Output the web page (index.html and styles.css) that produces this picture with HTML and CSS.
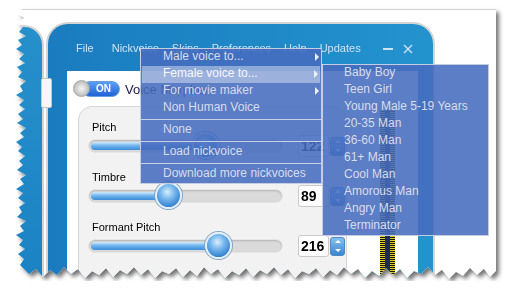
FILE: index.html
```html
<!DOCTYPE html>
<html lang="en">
  <head>
    <title>Nickvoice menu</title>
    <link rel="stylesheet" href="styles.css">
  </head>

  <body>
    <div class="stage">
      <div class="paper">
        <div class="sheet">
          <div class="side-win"></div>
          <div class="main-win">
            <div class="menubar">
              <span class="mb-file">File</span>
              <span>Nickvoice</span>
              <span>Skins</span>
              <span>Preferences</span>
              <span>Help</span>
              <span>Updates</span>
              <span class="win-btns">
                <span class="min"></span>
                <svg width="10" height="10" viewBox="0 0 10 10"><path d="M1 1L9 9M9 1L1 9" stroke="#cfe2f1" stroke-width="1.4"/></svg>
              </span>
            </div>
            <div class="content">
              <div class="toggle-row">
                <div class="toggle">
                  <span class="pill">ON</span>
                  <span class="knob"></span>
                </div>
                <span class="title">Voice Morpher</span>
              </div>
              <div class="body-row">
                <div class="panel">
                  <div class="ctl">
                    <div class="ctl-label">Pitch</div>
                    <div class="slider-row">
                      <div class="track"><div class="fill" style="width:117px"></div><div class="thumb" style="left:103px"></div></div>
                      <div class="val">122</div>
                      <div class="spin"><span class="up"></span><span class="down"></span></div>
                    </div>
                  </div>
                  <div class="ctl">
                    <div class="ctl-label">Timbre</div>
                    <div class="slider-row">
                      <div class="track"><div class="fill" style="width:80px"></div><div class="thumb" style="left:66px"></div></div>
                      <div class="val">89</div>
                      <div class="spin"><span class="up"></span><span class="down"></span></div>
                    </div>
                  </div>
                  <div class="ctl">
                    <div class="ctl-label">Formant Pitch</div>
                    <div class="slider-row">
                      <div class="track"><div class="fill" style="width:130px"></div><div class="thumb" style="left:116px"></div></div>
                      <div class="val">216</div>
                      <div class="spin"><span class="up"></span><span class="down"></span></div>
                    </div>
                  </div>
                </div>
                <div class="meter"><span class="bar"></span><span class="mid"></span><span class="bar"></span></div>
              </div>
            </div>
          </div>
        </div>
      </div>

      <div class="handle"></div>

      <div class="menu main-menu">
        <div class="menu-item">Male voice to...<span class="arrow"></span></div>
        <div class="menu-item active">Female voice to...<span class="arrow"></span></div>
        <div class="menu-item">For movie maker<span class="arrow"></span></div>
        <div class="menu-item">Non Human Voice</div>
        <div class="sep"></div>
        <div class="menu-item">None</div>
        <div class="sep"></div>
        <div class="menu-item">Load nickvoice</div>
        <div class="sep"></div>
        <div class="menu-item">Download more nickvoices</div>
      </div>

      <div class="menu sub-menu">
        <div class="menu-item">Baby Boy</div>
        <div class="menu-item">Teen Girl</div>
        <div class="menu-item">Young Male 5-19 Years</div>
        <div class="menu-item">20-35 Man</div>
        <div class="menu-item">36-60 Man</div>
        <div class="menu-item">61+ Man</div>
        <div class="menu-item">Cool Man</div>
        <div class="menu-item">Amorous Man</div>
        <div class="menu-item">Angry Man</div>
        <div class="menu-item">Terminator</div>
      </div>
    </div>
  </body>
</html>
```

FILE: styles.css
```css
body {
  margin: 0;
  background-color: white;
  font-family: "Liberation Sans", Arial, sans-serif;
}

.stage {
  position: relative;
  padding: 9px 0 0 14px;
}

/* torn screenshot */
.paper {
  width: 482px;
  height: 272px;
  filter: drop-shadow(3px 3px 2px rgba(0, 0, 0, 0.55));
}

.sheet {
  width: 100%;
  height: 100%;
  box-sizing: border-box;
  background-color: white;
  border-top: 1px solid #d4d4d4;
  display: flex;
  align-items: flex-start;
  overflow: hidden;
  clip-path: polygon(8px 0, 482px 0, 482px 262px, 476px 268px, 470px 260px, 463px 266px, 456px 259px, 449px 267px, 442px 263px, 435px 270px, 428px 261px, 421px 266px, 414px 258px, 407px 265px, 400px 262px, 393px 269px, 386px 260px, 379px 266px, 372px 259px, 365px 267px, 358px 262px, 351px 269px, 344px 260px, 337px 265px, 330px 258px, 323px 266px, 316px 261px, 309px 268px, 302px 259px, 295px 265px, 288px 262px, 281px 269px, 274px 260px, 267px 266px, 260px 258px, 253px 265px, 246px 261px, 239px 268px, 232px 259px, 225px 266px, 218px 262px, 211px 269px, 204px 260px, 197px 265px, 190px 258px, 183px 267px, 176px 261px, 169px 268px, 162px 259px, 155px 265px, 148px 262px, 141px 269px, 134px 260px, 127px 266px, 120px 258px, 113px 265px, 106px 261px, 99px 268px, 92px 259px, 85px 266px, 78px 262px, 71px 269px, 64px 260px, 57px 265px, 50px 258px, 43px 266px, 36px 261px, 29px 268px, 22px 260px, 15px 265px, 12px 262px, 6px 256px, 10px 250px, 4px 245px, 11px 240px, 5px 236px, 9px 231px, 2px 226px, 10px 222px, 6px 217px, 12px 212px, 3px 208px, 8px 203px, 5px 198px, 11px 194px, 4px 189px, 9px 184px, 2px 180px, 10px 175px, 6px 170px, 12px 166px, 3px 161px, 9px 156px, 5px 152px, 11px 147px, 4px 142px, 8px 138px, 2px 133px, 10px 128px, 6px 124px, 12px 119px, 3px 114px, 9px 110px, 4px 105px, 11px 100px, 5px 96px, 10px 91px, 2px 86px, 9px 82px, 6px 77px, 12px 72px, 4px 68px, 8px 63px, 3px 58px, 11px 54px, 5px 50px, 10px 45px, 2px 40px, 8px 36px, 4px 31px, 12px 27px, 5px 23px, 9px 18px, 3px 14px, 10px 9px, 4px 5px);
}

.side-win {
  margin-top: 15px;
  width: 28px;
  height: 260px;
  background: linear-gradient(to bottom, #2690cb, #1b82c3);
  border-top: 2px solid #d4d4d4;
  border-right: 2px solid #d4d4d4;
  border-top-right-radius: 20px;
}

.main-win {
  margin: 12px 0 0 2px;
  width: 385px;
  height: 258px;
  border: 2px solid #d4d4d4;
  border-bottom: 0;
  border-radius: 22px 22px 0 0;
  background: linear-gradient(to right, #1a7cbf, #2393ce);
  display: flex;
  flex-direction: column;
}

.menubar {
  flex-shrink: 0;
  height: 47px;
  box-sizing: border-box;
  padding: 18px 20px 0 28px;
  display: flex;
  align-items: flex-start;
  gap: 13px;
  font-size: 11px;
  line-height: 13px;
  color: #cfe2f1;
}
.mb-file {
  margin-right: 5px;
}
.win-btns {
  margin-left: auto;
  height: 13px;
  display: flex;
  align-items: center;
  gap: 10px;
}
.win-btns .min {
  width: 10px;
  height: 2px;
  background-color: #cfe2f1;
}

.content {
  flex: 1;
  min-height: 0;
  overflow: hidden;
  margin: 0 15px 0 19px;
  background-color: white;
}

.toggle-row {
  margin: 9px 0 0 6px;
  height: 18px;
  display: flex;
  align-items: center;
}
.toggle {
  position: relative;
  width: 47px;
  height: 18px;
}
.pill {
  display: block;
  margin: 1px 0 0 9px;
  width: 38px;
  height: 16px;
  box-sizing: border-box;
  border-radius: 8px;
  border: 1px solid #6a9be0;
  background: linear-gradient(to bottom, #5aa0f4, #1f63d6);
  color: white;
  font-size: 10px;
  font-weight: bold;
  line-height: 14px;
  padding-left: 13px;
}
.knob {
  position: absolute;
  left: 0;
  top: 0;
  width: 17px;
  height: 17px;
  box-sizing: border-box;
  border-radius: 50%;
  border: 1px solid #a8a8a8;
  background: radial-gradient(circle at 50% 50%, #f4f4f4 0, #d4d4d4 45%, #b4b4b4 80%, #e8e8e8 100%);
}
.title {
  margin-left: 5px;
  font-size: 13px;
  color: #17174a;
}

.body-row {
  margin: 8px 0 0 11px;
  display: flex;
  align-items: flex-start;
}

.panel {
  width: 269px;
  height: 200px;
  flex-shrink: 0;
  box-sizing: border-box;
  border: 1px solid #d6d6d6;
  border-radius: 14px;
  background-color: #f2f2f2;
  padding: 13px 0 0 9px;
}

.ctl {
  margin-bottom: 10px;
}
.ctl-label {
  margin: 0 0 -2px 4px;
  font-size: 11px;
  line-height: 14px;
  color: black;
}
.slider-row {
  height: 28px;
  display: flex;
  align-items: center;
}

.track {
  position: relative;
  width: 195px;
  height: 14px;
  flex-shrink: 0;
  box-sizing: border-box;
  border-radius: 7px;
  background-color: #dadada;
  border: 1px solid #e6e6e6;
  box-shadow: inset 0 1px 2px rgba(0, 0, 0, 0.18);
  margin-right: 15px;
}
.fill {
  position: absolute;
  left: 2px;
  top: 2px;
  height: 8px;
  border-radius: 4px;
  background: linear-gradient(to bottom, #d2ebfc, #71b5ee 45%, #3a8bd8);
}
.thumb {
  position: absolute;
  top: -8px;
  width: 27px;
  height: 27px;
  box-sizing: border-box;
  border-radius: 50%;
  border: 2px solid #e4eef7;
  box-shadow: 0 0 0 1px #7fa4c6;
  background: radial-gradient(circle at 45% 35%, #d8effd 0, #7ab9ee 35%, #3582d0 75%, #2c6eb6 100%);
}

.val {
  width: 31px;
  height: 22px;
  flex-shrink: 0;
  box-sizing: border-box;
  border: 1px solid #c9c9c9;
  border-radius: 3px;
  background-color: white;
  font-size: 14px;
  font-weight: bold;
  line-height: 20px;
  padding-left: 2px;
  margin-right: 1px;
}
.spin {
  width: 15px;
  height: 19px;
  flex-shrink: 0;
  box-sizing: border-box;
  border: 1px solid #4e88c2;
  border-radius: 3px;
  background: linear-gradient(to bottom, #86c0ef, #3a86d2);
  display: flex;
  flex-direction: column;
  align-items: center;
  justify-content: space-around;
}
.spin .up {
  border-bottom: 3px solid white;
  border-left: 3px solid transparent;
  border-right: 3px solid transparent;
}
.spin .down {
  border-top: 3px solid white;
  border-left: 3px solid transparent;
  border-right: 3px solid transparent;
}

.meter {
  margin: 4px 0 0 33px;
  width: 15px;
  height: 200px;
  display: flex;
}
.meter .bar {
  width: 5px;
  background: repeating-linear-gradient(to bottom, #e3cd2a 0, #e3cd2a 1px, #151515 1px, #151515 2px);
}
.meter .mid {
  width: 5px;
  background-color: #1d2b4c;
}

.handle {
  position: absolute;
  left: 41px;
  top: 78px;
  width: 9px;
  height: 28px;
  background-color: #f6f6f6;
  border: 1px solid #c6c6c6;
  border-radius: 2px;
}

/* popup menus */
.menu {
  position: absolute;
  box-sizing: border-box;
  background-color: rgba(70, 108, 190, 0.88);
  border: 1px solid #c6cce2;
  font-size: 12px;
  color: #d9dcea;
}
.main-menu {
  left: 140px;
  top: 48px;
  width: 182px;
  height: 136px;
}
.sub-menu {
  left: 322px;
  top: 64px;
  width: 167px;
  height: 172px;
}
.menu-item {
  position: relative;
  height: 17px;
  line-height: 15px;
  padding-left: 22px;
  white-space: nowrap;
}
.sub-menu .menu-item {
  padding-left: 21px;
}
.menu-item.active {
  margin: 0 1px;
  padding-left: 21px;
  background-color: rgba(255, 255, 255, 0.4);
  color: #f6f7fb;
}
.arrow {
  position: absolute;
  right: 2px;
  top: 4px;
  border-left: 4px solid #eef0f8;
  border-top: 4px solid transparent;
  border-bottom: 4px solid transparent;
}
.sep {
  height: 1px;
  margin: 2px 0;
  background-color: #c8d0ea;
}
```
